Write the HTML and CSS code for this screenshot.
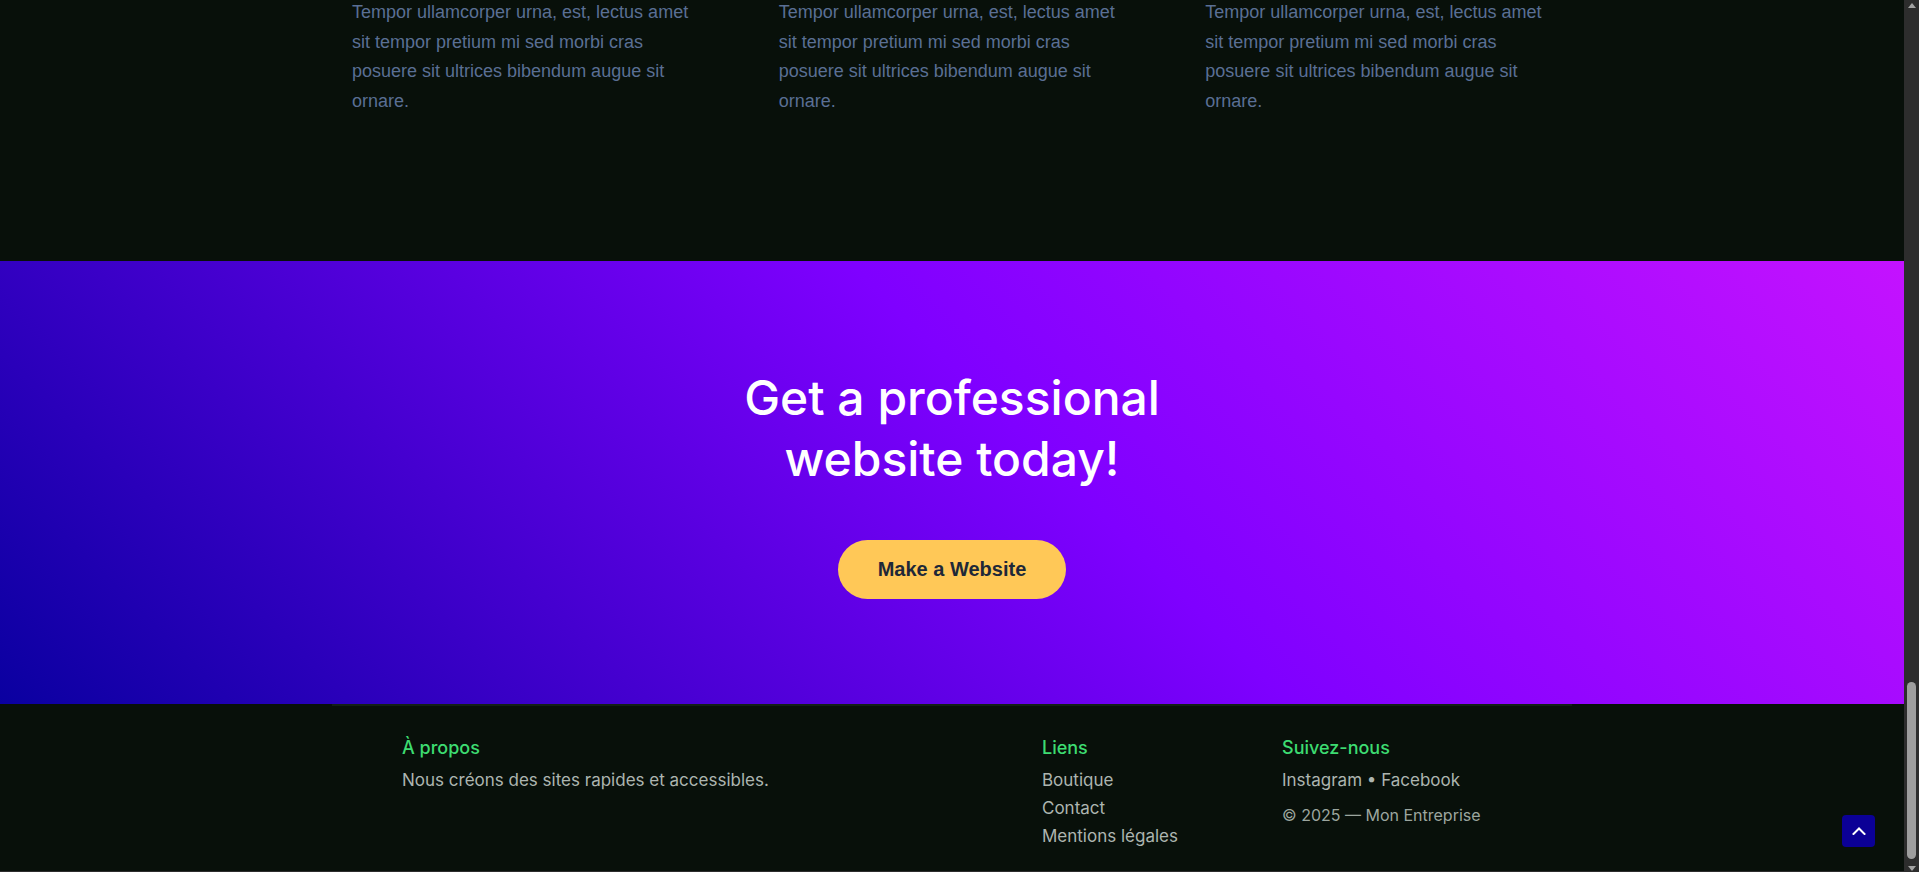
FILE: index.html
```html
<!DOCTYPE html>
<html lang="fr">
<head>
<meta charset="utf-8">
<title>Mon Entreprise</title>
<link rel="stylesheet" href="styles.css">
</head>
<body>
  <section class="features">
    <div class="features-grid">
      <p class="feature-text">Tempor ullamcorper urna, est, lectus amet sit tempor pretium mi sed morbi cras posuere sit ultrices bibendum augue sit ornare.</p>
      <p class="feature-text">Tempor ullamcorper urna, est, lectus amet sit tempor pretium mi sed morbi cras posuere sit ultrices bibendum augue sit ornare.</p>
      <p class="feature-text">Tempor ullamcorper urna, est, lectus amet sit tempor pretium mi sed morbi cras posuere sit ultrices bibendum augue sit ornare.</p>
    </div>
  </section>

  <section class="cta">
    <h2 class="cta-title">Get a professional<br>website today!</h2>
    <a class="cta-button" href="#">Make a Website</a>
  </section>

  <footer class="footer">
    <div class="footer-wrap">
      <div class="footer-grid">
        <div class="footer-col">
          <h3 class="footer-title">À propos</h3>
          <p class="footer-text">Nous créons des sites rapides et accessibles.</p>
        </div>
        <div class="footer-col">
          <h3 class="footer-title">Liens</h3>
          <ul class="footer-links">
            <li><a href="#">Boutique</a></li>
            <li><a href="#">Contact</a></li>
            <li><a href="#">Mentions légales</a></li>
          </ul>
        </div>
        <div class="footer-col">
          <h3 class="footer-title">Suivez-nous</h3>
          <p class="footer-text">Instagram • Facebook</p>
          <p class="footer-copy">© 2025 — Mon Entreprise</p>
        </div>
      </div>
    </div>
  </footer>

  <a class="back-to-top" href="#" aria-label="Retour en haut">
    <svg width="14" height="8" viewBox="0 0 14 8" fill="none" stroke="#ffffff" stroke-width="2" stroke-linecap="square" stroke-linejoin="miter"><path d="M1.5 7 L7 1.5 L12.5 7"/></svg>
  </a>

  <div class="scrollbar" aria-hidden="true">
    <span class="scroll-arrow scroll-arrow-up"></span>
    <span class="scroll-thumb"></span>
    <span class="scroll-arrow scroll-arrow-down"></span>
  </div>
</body>
</html>
```

FILE: styles.css
```css
* {
  box-sizing: border-box;
}

html {
  background: #2d2d2d;
}

body {
  margin: 0 15px 0 0;
  background: #08100a;
  font-family: "Inter", "Liberation Sans", sans-serif;
  color: #a7b1ab;
}

/* Features tail */
.features {
  padding: 0 0 144px;
}

.features-grid {
  width: 1200px;
  margin: -2px auto 0;
  display: grid;
  grid-template-columns: repeat(3, 1fr);
  column-gap: 80px;
}

.feature-text {
  margin: 0;
  font-family: "Liberation Sans", Arial, sans-serif;
  font-size: 18px;
  line-height: 1.65;
  color: #5a6f94;
}

/* CTA */
.cta {
  background: linear-gradient(45deg, #0a00a0 0%, #7f00ff 55%, #c412ff 100%);
  padding: 106px 0 105px;
  display: flex;
  flex-direction: column;
  align-items: center;
  text-align: center;
}

.cta-title {
  margin: 0 0 50px;
  font-family: "Inter", sans-serif;
  font-weight: 500;
  font-size: 48px;
  line-height: 61.5px;
  color: #ffffff;
}

.cta-button {
  display: inline-block;
  background: #ffc857;
  color: #1e2838;
  font-family: "Liberation Sans", Arial, sans-serif;
  font-weight: 700;
  font-size: 20px;
  line-height: 23px;
  padding: 18px 40px;
  border-radius: 30px;
  text-decoration: none;
}

/* Footer */
.footer-wrap {
  width: 1240px;
  margin: 0 auto;
  border-top: 2px solid #132016;
  padding: 31px 0 21px;
}

.footer-grid {
  width: 1100px;
  margin: 0 auto;
  display: grid;
  grid-template-columns: 600px 200px 1fr;
  column-gap: 40px;
}

.footer-title {
  margin: 0 0 8px;
  font-family: "Inter", sans-serif;
  font-weight: 500;
  font-size: 18px;
  line-height: 21.6px;
  color: #3ddc71;
}

.footer-text {
  margin: 0;
  font-size: 17px;
  line-height: 28px;
  color: #adb5b0;
}

.footer-copy {
  margin: 7px 0 0;
  font-size: 16px;
  line-height: 28px;
  color: #9ca69f;
}

.footer-links {
  list-style: none;
  margin: 0;
  padding: 0;
}

.footer-links li {
  font-size: 17px;
  line-height: 28px;
}

.footer-links a {
  color: #adb5b0;
  text-decoration: none;
}

/* Back to top */
.back-to-top {
  position: fixed;
  right: 44px;
  bottom: 25px;
  width: 33px;
  height: 32px;
  border-radius: 4px;
  background: #0b0096;
  display: flex;
  align-items: center;
  justify-content: center;
}

/* Simulated browser scrollbar (page shown scrolled to the bottom) */
.scrollbar {
  position: fixed;
  top: 0;
  right: 0;
  width: 15px;
  height: 100vh;
  background: #2d2d2d;
  display: flex;
  flex-direction: column;
  align-items: center;
}

.scroll-arrow {
  width: 0;
  height: 0;
  border-left: 4.5px solid transparent;
  border-right: 4.5px solid transparent;
}

.scroll-arrow-up {
  margin-top: 3px;
  border-bottom: 5px solid #a3a3a3;
}

.scroll-thumb {
  width: 9px;
  height: 177px;
  margin-top: auto;
  border-radius: 5px;
  background: #9e9e9e;
}

.scroll-arrow-down {
  margin-top: 7px;
  margin-bottom: 1px;
  border-top: 5px solid #a3a3a3;
}
```
